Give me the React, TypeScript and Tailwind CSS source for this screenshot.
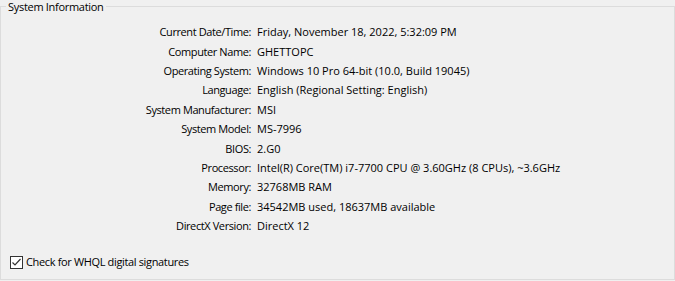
import React from "react";

const rows: [string, string][] = [
  ["Current Date/Time:", "Friday, November 18, 2022, 5:32:09 PM"],
  ["Computer Name:", "GHETTOPC"],
  ["Operating System:", "Windows 10 Pro 64-bit (10.0, Build 19045)"],
  ["Language:", "English (Regional Setting: English)"],
  ["System Manufacturer:", "MSI"],
  ["System Model:", "MS-7996"],
  ["BIOS:", "2.G0"],
  ["Processor:", "Intel(R) Core(TM) i7-7700 CPU @ 3.60GHz (8 CPUs), ~3.6GHz"],
  ["Memory:", "32768MB RAM"],
  ["Page file:", "34542MB used, 18637MB available"],
  ["DirectX Version:", "DirectX 12"],
];

export default function App() {
  return (
    <div
      className="w-[675px] h-[281px] bg-[#f0f0f0] text-[11px] text-black overflow-hidden"
      style={{ fontFamily: '"Segoe UI", "Open Sans", "Liberation Sans", sans-serif' }}
    >
      <div className="pt-[6px] pb-[1px] h-full">
        <div className="relative h-full border border-[#dcdcdc]">
          <div className="absolute left-[5px] top-[-7px] px-[2px] bg-[#f0f0f0] leading-[14px] tracking-[-0.3px]">
            System Information
          </div>
          <div className="grid grid-cols-[250px_1fr] gap-x-[6px] auto-rows-[19.4px] pt-[15.5px] items-center">
            {rows.map(([k, v]) => (
              <React.Fragment key={k}>
                <div className="text-right leading-[16px] whitespace-nowrap tracking-[-0.4px]">{k}</div>
                <div className="leading-[16px] whitespace-nowrap">{v}</div>
              </React.Fragment>
            ))}
          </div>
          <div className="absolute left-[9px] top-[247px] flex items-center gap-[3px]">
            <div className="w-[13px] h-[13px] border border-[#333] bg-white flex items-center justify-center">
              <svg width="11" height="11" viewBox="0 0 11 11">
                <path d="M1.5 5.5 L4 8 L9.5 2" stroke="#333" strokeWidth="1.2" fill="none" />
              </svg>
            </div>
            <span className="leading-[16px] tracking-[-0.35px]">Check for WHQL digital signatures</span>
          </div>
        </div>
      </div>
    </div>
  );
}
